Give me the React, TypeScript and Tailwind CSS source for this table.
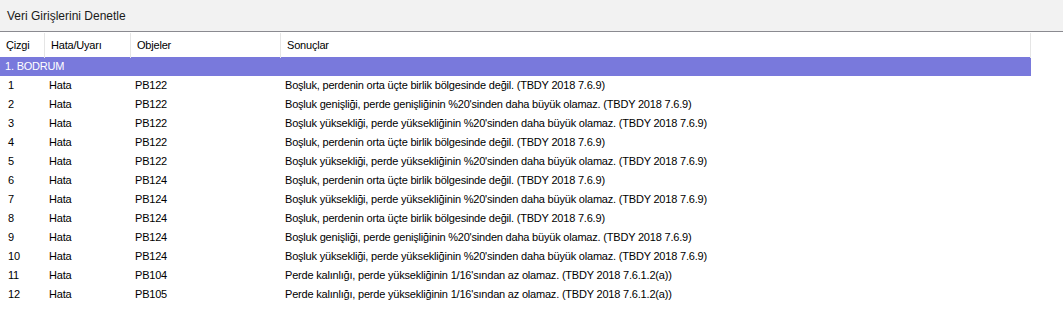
import React from 'react';

type Row = { no: number; type: string; obj: string; msg: string };

const A = "Boşluk, perdenin orta üçte birlik bölgesinde değil. (TBDY 2018 7.6.9)";
const B = "Boşluk genişliği, perde genişliğinin %20'sinden daha büyük olamaz. (TBDY 2018 7.6.9)";
const C = "Boşluk yüksekliği, perde yüksekliğinin %20'sinden daha büyük olamaz. (TBDY 2018 7.6.9)";
const D = "Perde kalınlığı, perde yüksekliğinin 1/16'sından az olamaz. (TBDY 2018 7.6.1.2(a))";

const rows: Row[] = [
  { no: 1, type: 'Hata', obj: 'PB122', msg: A },
  { no: 2, type: 'Hata', obj: 'PB122', msg: B },
  { no: 3, type: 'Hata', obj: 'PB122', msg: C },
  { no: 4, type: 'Hata', obj: 'PB122', msg: A },
  { no: 5, type: 'Hata', obj: 'PB122', msg: C },
  { no: 6, type: 'Hata', obj: 'PB124', msg: A },
  { no: 7, type: 'Hata', obj: 'PB124', msg: C },
  { no: 8, type: 'Hata', obj: 'PB124', msg: A },
  { no: 9, type: 'Hata', obj: 'PB124', msg: B },
  { no: 10, type: 'Hata', obj: 'PB124', msg: C },
  { no: 11, type: 'Hata', obj: 'PB104', msg: D },
  { no: 12, type: 'Hata', obj: 'PB105', msg: D },
];

const headers = [
  { label: 'Çizgi', w: 'w-[45px]' },
  { label: 'Hata/Uyarı', w: 'w-[86px]' },
  { label: 'Objeler', w: 'w-[150px]' },
  { label: 'Sonuçlar', w: 'w-[750px]' },
];

const App: React.FC = () => {
  return (
    <div className="w-[1063px] h-[319px] bg-white overflow-hidden text-black font-['Liberation_Sans',Arial,sans-serif]">
      {/* Title bar */}
      <div className="h-[32px] bg-[#f2f2f2] border-b border-[#8a8a90] flex items-center px-[7px]">
        <span className="text-[12px] text-[#1a1a1a]">Veri Girişlerini Denetle</span>
      </div>

      <div className="text-[11px] tracking-[-0.2px]">
        {/* Column headers */}
        <div className="flex h-[25px] w-[1031px]">
          {headers.map((h) => (
            <div
              key={h.label}
              className={`${h.w} h-full flex items-center pl-[6px] border-r border-[#e5e5e5] mt-[1px]`}
            >
              {h.label}
            </div>
          ))}
        </div>

        {/* Group row */}
        <div className="w-[1031px] h-[19px] bg-[#7979dc] text-white flex items-center pl-[5px]">
          1. BODRUM
        </div>

        {/* Data rows */}
        <div className="w-[1031px]">
          {rows.map((r) => (
            <div key={r.no} className="flex h-[19px] items-center">
              <div className="w-[45px] pl-[8px]">{r.no}</div>
              <div className="w-[86px] pl-[4px]">{r.type}</div>
              <div className="w-[150px] pl-[4px]">{r.obj}</div>
              <div className="flex-1 pl-[4px] whitespace-nowrap">{r.msg}</div>
            </div>
          ))}
        </div>
      </div>
    </div>
  );
};

export default App;
